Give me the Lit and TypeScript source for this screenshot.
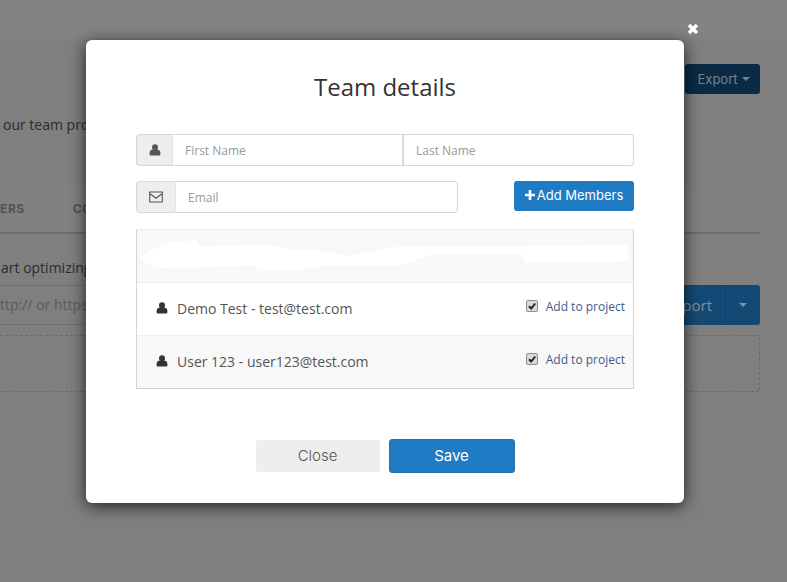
import { LitElement, html, css } from "lit";
import { customElement } from "lit/decorators.js";

const person = (cls: string) => html`<svg class=${cls} viewBox="0 0 12 12" aria-hidden="true">
  <circle cx="6" cy="3.300" r="3"/>
  <path d="M3.400 5.400C1.800 5.700.6 6.900.6 8.900v1.400c0 .8.500 1.300 1.300 1.300h8.200c.8 0 1.300-.5 1.300-1.300V8.900c0-2-1.200-3.200-2.800-3.500z"/>
</svg>`;

const rows = [
  { text: "Demo Test - test@test.com", alt: false },
  { text: "User 123 - user123@test.com", alt: true },
];

@customElement("app-root")
export class AppRoot extends LitElement {
  static styles = css`
    :host { display: block; width: 787px; height: 582px; position: relative; overflow: hidden; background: #7f7f7f; font-family: "Open Sans", "Noto Sans", sans-serif; color: #333; }
    * { box-sizing: border-box; }

    /* dimmed page behind the dialog */
    .page { height: 582px; display: flex; flex-direction: column; }
    .top { height: 39px; background: #838383; flex: none; }
    .content { flex: 1; padding: 25px 27px 0 0; display: flex; flex-direction: column; }
    .export-row { display: flex; justify-content: flex-end; }
    .export { width: 75px; height: 30px; border-radius: 3px; background: #0b2a45; color: #76828a; font: 13px Inter, sans-serif; display: flex; align-items: center; justify-content: center; gap: 4px; padding-left: 2px; }
    .caret { width: 0; height: 0; border-left: 4px solid transparent; border-right: 4px solid transparent; border-top: 4px solid currentColor; }
    .lead { margin-top: 21px; font-size: 14px; line-height: 20px; color: #2c2c2c; padding-left: 3px; }
    .tabs { margin-top: 50px; height: 49px; background: #818181; border-bottom: 2px solid #6e6e6e; display: flex; align-items: center; gap: 48px; font: 700 12px Inter, sans-serif; letter-spacing: .6px; color: #4c545b; }
    .hint { margin-top: 24px; height: 20px; font-size: 14px; line-height: 20px; color: #2c2c2c; padding-left: 1px; }
    .url-row { margin-top: 7px; height: 40px; display: flex; }
    .url { flex: 1; border-top: 1px solid #6e6e6e; border-bottom: 1px solid #6e6e6e; font-size: 14px; line-height: 38px; color: #5a5a5a; }
    .go { width: 90px; background: #124a75; border-radius: 0 3px 3px 0; color: #82929e; font-size: 15px; display: flex; }
    .go b { flex: 1; font-weight: 400; line-height: 40px; text-align: right; padding-right: 13px; }
    .go i { width: 35px; border-left: 1px solid #0f4069; display: flex; align-items: center; justify-content: center; color: #7e93a3; }
    .drop { margin-top: 10px; height: 57px; border: 1px dashed #6a6a6a; border-left: 0; border-radius: 0 3px 3px 0; }

    /* overlay */
    .x { position: absolute; left: 687px; top: 23px; width: 12px; height: 12px; }
    .modal { position: absolute; left: 86px; top: 40px; width: 598px; height: 463px; background: #fff; border-radius: 6px; box-shadow: 0 3px 16px rgba(0,0,0,.75); padding: 0 50px; display: flex; flex-direction: column; }
    h2 { margin: 0; padding-top: 30px; height: 94px; font-size: 24px; font-weight: 400; line-height: 34px; text-align: center; color: #333; }

    .group { display: flex; height: 32px; font-size: 12px; color: #999; }
    .addon { flex: none; width: 37px; background: #eee; border: 1px solid #d6d6d6; border-right: 1px solid #e2e2e2; border-radius: 4px 0 0 4px; display: flex; align-items: center; justify-content: center; color: #555; }
    .addon .ico { width: 12px; height: 12px; fill: #555; }
    .field { flex: 1; border: 1px solid #d6d6d6; border-left: 0; line-height: 31px; padding-left: 12px; background: #fff; }
    .field.end { border-radius: 0 4px 4px 0; }
    .field.mid { border-right: 2px solid #d9d9e0; }
    .first { flex: 0 0 231px; }
    .row2 { display: flex; justify-content: space-between; margin-top: 15px; }
    .email { width: 322px; }
    .email .addon { width: 40px; }
    .email .addon .ico { width: 14px; fill: none; }
    .add { width: 120px; height: 30px; padding-bottom: 2px; background: #1f7bc4; border-radius: 3px; color: #fff; font: 13px Inter, sans-serif; display: flex; align-items: center; justify-content: center; gap: 2px; }
    .add svg { width: 10px; height: 10px; fill: #fff; }

    .list { margin-top: 16px; border: 1px solid #d4d4d4; border-top-color: #eee; border-bottom-color: #cfcfcf; height: 160px; display: flex; flex-direction: column; }
    .list-head { height: 52px; background: #f8f8f8; position: relative; flex: none; }
    .list-head svg { position: absolute; left: 0; top: 0; width: 496px; height: 52px; fill: #fff; }
    .item { flex: 1; border-top: 1px solid #eee; display: flex; align-items: center; padding: 0 8px 2px 19px; font-size: 14px; color: #555; }
    .item.alt { background: #f8f8f8; }
    .item .ico { width: 12px; height: 12px; fill: #333; flex: none; margin-right: 9px; }
    .name { flex: 1; }
    .check { display: flex; align-items: center; gap: 8px; font-size: 12px; color: #3c5c8e; margin-top: -4px; }
    .box { width: 12px; height: 12px; border: 1px solid #8f8f8f; border-radius: 2px; background: #d9d9d9; display: flex; align-items: center; justify-content: center; }
    .box svg { width: 10px; height: 10px; fill: none; stroke: #222; stroke-width: 2; }

    .actions { margin-top: 50px; display: flex; justify-content: center; align-items: center; gap: 9px; font: 15px Inter, sans-serif; }
    .close { width: 124px; height: 32px; padding-bottom: 2px; background: #eee; border-radius: 2px; color: #555; font-weight: 300; display: flex; align-items: center; justify-content: center; }
    .save { width: 126px; height: 34px; padding-bottom: 2px; background: #1f7bc4; border: 1px solid #2a6ea8; border-radius: 3px; color: #fff; display: flex; align-items: center; justify-content: center; }
  `;

  render() {
    return html`
      <div class="page">
        <div class="top"></div>
        <div class="content">
          <div class="export-row"><div class="export">Export <span class="caret"></span></div></div>
          <div class="lead">our team pro</div>
          <div class="tabs"><span>ERS</span><span>CO</span></div>
          <div class="hint">art optimizing</div>
          <div class="url-row">
            <div class="url">ttp:// or https</div>
            <div class="go"><b>port</b><i><span class="caret"></span></i></div>
          </div>
          <div class="drop"></div>
        </div>
      </div>

      <svg class="x" viewBox="0 0 12 12"><path d="M2 2l8 8M10 2l-8 8" stroke="#fff" stroke-width="3.500" fill="none"/></svg>

      <div class="modal">
        <h2>Team details</h2>
        <div class="group">
          <div class="addon">${person("ico")}</div>
          <div class="field mid first">First Name</div>
          <div class="field end">Last Name</div>
        </div>
        <div class="row2">
          <div class="group email">
            <div class="addon">
              <svg class="ico" viewBox="0 0 14 12"><path d="M.7 1h12.600v10H.7zM.7 2.500L7 7.300l6.300-4.800" stroke="#555" stroke-width="1.100" fill="none"/></svg>
            </div>
            <div class="field end">Email</div>
          </div>
          <div class="add">
            <svg viewBox="0 0 10 10"><path d="M3.700 0h2.600v3.700H10v2.600H6.300V10H3.700V6.300H0V3.700h3.700z"/></svg>
            Add Members
          </div>
        </div>
        <div class="list">
          <div class="list-head">
            <svg viewBox="0 0 496 52"><path d="M4 26L19 18 32 13 59 10 62 16 112 15 132 15 159 20 186 21 212 26 249 18 272 16 315 16 489 15 491 16 491 31 389 33 386 25 292 25 266 35 249 35 212 36 186 36 159 40 121 41 119 36 22 38 4 31Z"/></svg>
          </div>
          ${rows.map(r => html`
            <div class="item ${r.alt ? "alt" : ""}">
              ${person("ico")}
              <span class="name">${r.text}</span>
              <span class="check">
                <span class="box"><svg viewBox="0 0 10 10"><path d="M2 5.200l2.200 2.300L8.200 2.500"/></svg></span>
                Add to project
              </span>
            </div>`)}
        </div>
        <div class="actions">
          <div class="close">Close</div>
          <div class="save">Save</div>
        </div>
      </div>
    `;
  }
}
